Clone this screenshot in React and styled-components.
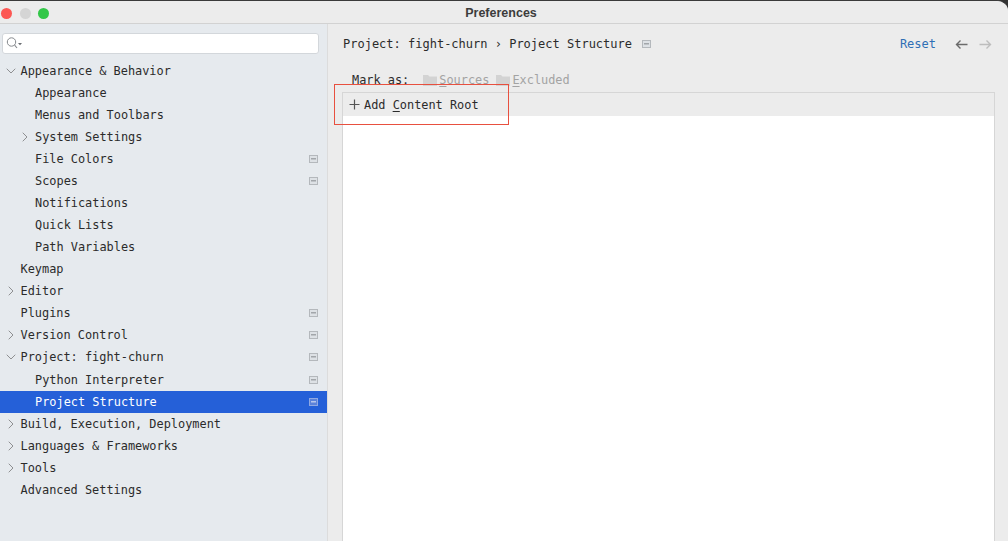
import React from "react";
import styled, { createGlobalStyle } from "styled-components";
import { ChevronDown, ChevronRight } from "lucide-react";

const GlobalStyle = createGlobalStyle`
  html, body {
    margin: 0;
    padding: 0;
    background: #333;
    overflow: hidden;
  }
`;

const Window = styled.div`
  position: relative;
  width: 1008px;
  height: 541px;
  overflow: hidden;
  display: flex;
  flex-direction: column;
  background: #ececec;
  border-top: 1px solid #3a3a3a;
  border-top-right-radius: 11px;
  box-sizing: border-box;
  font-family: "DejaVu Sans Mono", "Liberation Mono", monospace;
  font-size: 11.9px;
  color: #2b2b2b;
`;

const TitleBar = styled.header`
  position: relative;
  flex: 0 0 20px;
  display: flex;
  align-items: center;
  justify-content: center;
  padding: 2px 6px 0 0;
  background: #ececec;
  border-bottom: 1px solid #d2d2d2;
`;

const Lights = styled.div`
  position: absolute;
  left: 1px;
  top: 7px;
  display: flex;
  gap: 7.5px;
`;

const Light = styled.span`
  width: 11px;
  height: 11px;
  border-radius: 50%;
  background: ${(p) => p.$color};
`;

const Title = styled.h1`
  margin: 0;
  font-family: "Liberation Sans", Arial, sans-serif;
  font-size: 12.5px;
  font-weight: 700;
  color: #3c3c3c;
`;

const Body = styled.div`
  flex: 1;
  display: flex;
  min-height: 0;
`;

const Sidebar = styled.aside`
  flex: 0 0 327px;
  background: #e6eaee;
  border-right: 1px solid #dcdcdc;
  padding-top: 9px;
`;

const SearchBox = styled.div`
  height: 19px;
  margin: 0 8px 5.85px 2px;
  padding-left: 3px;
  display: flex;
  align-items: center;
  background: #fff;
  border: 1px solid #d3d7db;
  border-radius: 3px;
`;

const Tree = styled.ul`
  list-style: none;
  margin: 0;
  padding: 0;
`;

const Row = styled.li`
  height: 22.05px;
  display: flex;
  align-items: center;
  padding-left: ${(p) => (p.$sub ? 35 : 20.5)}px;
  padding-right: 9px;
  position: relative;
  color: ${(p) => (p.$active ? "#fff" : "#2b2b2b")};
  background: ${(p) => (p.$active ? "#2560d8" : "transparent")};
`;

const RowLabel = styled.span`
  flex: 1;
  white-space: pre;
`;

const Arrow = styled.span`
  position: absolute;
  left: ${(p) => (p.$sub ? 17 : 2.5)}px;
  top: 3px;
  display: flex;
  color: #6e6e6e;
`;

const ProjectIcon = styled.svg`
  width: 9px;
  height: 8px;
  flex: none;
`;

const Main = styled.main`
  flex: 1;
  min-width: 0;
  display: flex;
  flex-direction: column;
  padding: 0 13px 0 14px;
`;

const Header = styled.div`
  height: 42px;
  display: flex;
  align-items: center;
  padding: 0 3px 2px 1px;
  box-sizing: border-box;
  font-size: 12px;
`;

const Breadcrumb = styled.span`
  white-space: pre;
  margin-right: 10px;
`;

const Spacer = styled.div`
  flex: 1;
`;

const ResetLink = styled.a`
  color: #2f6fb5;
  margin-right: 19px;
`;

const NavArrows = styled.div`
  display: flex;
  gap: 11px;
  align-items: center;
`;

const MarkRow = styled.div`
  height: 26px;
  padding: 1px 0 0 10px;
  display: flex;
  align-items: center;
  box-sizing: border-box;
`;

const MarkLabel = styled.span`
  margin-right: 14px;
`;

const MarkOption = styled.span`
  display: flex;
  align-items: center;
  gap: 2px;
  margin-right: 7px;
  color: #a3a3a3;
`;

const Key = styled.span`
  text-decoration: underline;
  text-underline-offset: 2px;
`;

const ContentPane = styled.section`
  flex: 1;
  display: flex;
  flex-direction: column;
  border: 1px solid #d6d6d6;
  border-bottom: none;
`;

const PaneToolbar = styled.div`
  flex: 0 0 23px;
  display: flex;
  align-items: center;
  padding-left: 6px;
  gap: 4px;
`;

const AddLabel = styled.span`
  white-space: pre;
`;

const PaneBody = styled.div`
  flex: 1;
  background: #fff;
`;

const Callout = styled.div`
  position: absolute;
  left: 334px;
  top: 83px;
  width: 173px;
  height: 39px;
  border: 1.5px solid #e8503f;
  pointer-events: none;
`;

const sections = [
  { label: "Appearance & Behavior", open: true },
  { label: "Appearance", sub: true },
  { label: "Menus and Toolbars", sub: true },
  { label: "System Settings", sub: true, closed: true },
  { label: "File Colors", sub: true, icon: true },
  { label: "Scopes", sub: true, icon: true },
  { label: "Notifications", sub: true },
  { label: "Quick Lists", sub: true },
  { label: "Path Variables", sub: true },
  { label: "Keymap" },
  { label: "Editor", closed: true },
  { label: "Plugins", icon: true },
  { label: "Version Control", closed: true, icon: true },
  { label: "Project: fight-churn", open: true, icon: true },
  { label: "Python Interpreter", sub: true, icon: true },
  { label: "Project Structure", sub: true, icon: true, active: true },
  { label: "Build, Execution, Deployment", closed: true },
  { label: "Languages & Frameworks", closed: true },
  { label: "Tools", closed: true },
  { label: "Advanced Settings" },
];

const SmallProject = ({ active }) => (
  <ProjectIcon viewBox="0 0 9 8">
    <rect x="0.5" y="0.5" width="8" height="7" fill={active ? "#5b82da" : "#dde1e5"} stroke={active ? "#8fa8e2" : "#b4b8bc"} />
    <rect x="2" y="3" width="5" height="1.5" fill={active ? "#b7c6ec" : "#a2a6aa"} />
  </ProjectIcon>
);

const SearchIcon = () => (
  <svg width="17" height="13" viewBox="0 0 17 13" fill="none">
    <circle cx="5.5" cy="5" r="4.2" stroke="#85898d" />
    <path d="M8.6 8.1 L11 11" stroke="#85898d" strokeWidth="1.1" />
    <path d="M12 6 L16 6 L14 8.2 Z" fill="#6b6f73" />
  </svg>
);

const Folder = () => (
  <svg width="14" height="12" viewBox="0 0 14 12">
    <path d="M0 1 H5 L6.5 2.5 H14 V12 H0 Z" fill="#d3d3d3" />
  </svg>
);

const NavArrow = ({ color, flip }) => (
  <svg width="13" height="11" viewBox="0 0 13 11" fill="none" style={flip ? { transform: "scaleX(-1)" } : undefined}>
    <path d="M12.5 5.5 H1.5 M5.5 1.5 L1.5 5.5 L5.5 9.5" stroke={color} strokeWidth="1.4" />
  </svg>
);

const PlusIcon = () => (
  <svg width="11" height="11" viewBox="0 0 11 11" fill="none">
    <path d="M5.5 0.5 V10.5 M0.5 5.5 H10.5" stroke="#555" strokeWidth="1.2" />
  </svg>
);

const App = () => (
  <>
    <GlobalStyle />
    <Window>
      <TitleBar>
        <Lights>
          <Light $color="#fc5753" />
          <Light $color="#d5d5d5" />
          <Light $color="#33c748" />
        </Lights>
        <Title>Preferences</Title>
      </TitleBar>
      <Body>
        <Sidebar>
          <SearchBox>
            <SearchIcon />
          </SearchBox>
          <Tree>
            {sections.map((s) => (
              <Row key={s.label} $sub={s.sub} $active={s.active}>
                {s.open && (
                  <Arrow $sub={s.sub}>
                    <ChevronDown size={16} strokeWidth={1.1} />
                  </Arrow>
                )}
                {s.closed && (
                  <Arrow $sub={s.sub}>
                    <ChevronRight size={16} strokeWidth={1.1} />
                  </Arrow>
                )}
                <RowLabel>{s.label}</RowLabel>
                {s.icon && <SmallProject active={s.active} />}
              </Row>
            ))}
          </Tree>
        </Sidebar>
        <Main>
          <Header>
            <Breadcrumb>Project: fight-churn › Project Structure</Breadcrumb>
            <SmallProject />
            <Spacer />
            <ResetLink>Reset</ResetLink>
            <NavArrows>
              <NavArrow color="#6b6b6b" />
              <NavArrow color="#bdbdbd" flip />
            </NavArrows>
          </Header>
          <MarkRow>
            <MarkLabel>Mark as:</MarkLabel>
            <MarkOption>
              <Folder />
              <span><Key>S</Key>ources</span>
            </MarkOption>
            <MarkOption>
              <Folder />
              <span><Key>E</Key>xcluded</span>
            </MarkOption>
          </MarkRow>
          <ContentPane>
            <PaneToolbar>
              <PlusIcon />
              <AddLabel>Add <Key>C</Key>ontent Root</AddLabel>
            </PaneToolbar>
            <PaneBody />
          </ContentPane>
        </Main>
      </Body>
      <Callout />
    </Window>
  </>
);

export default App;
